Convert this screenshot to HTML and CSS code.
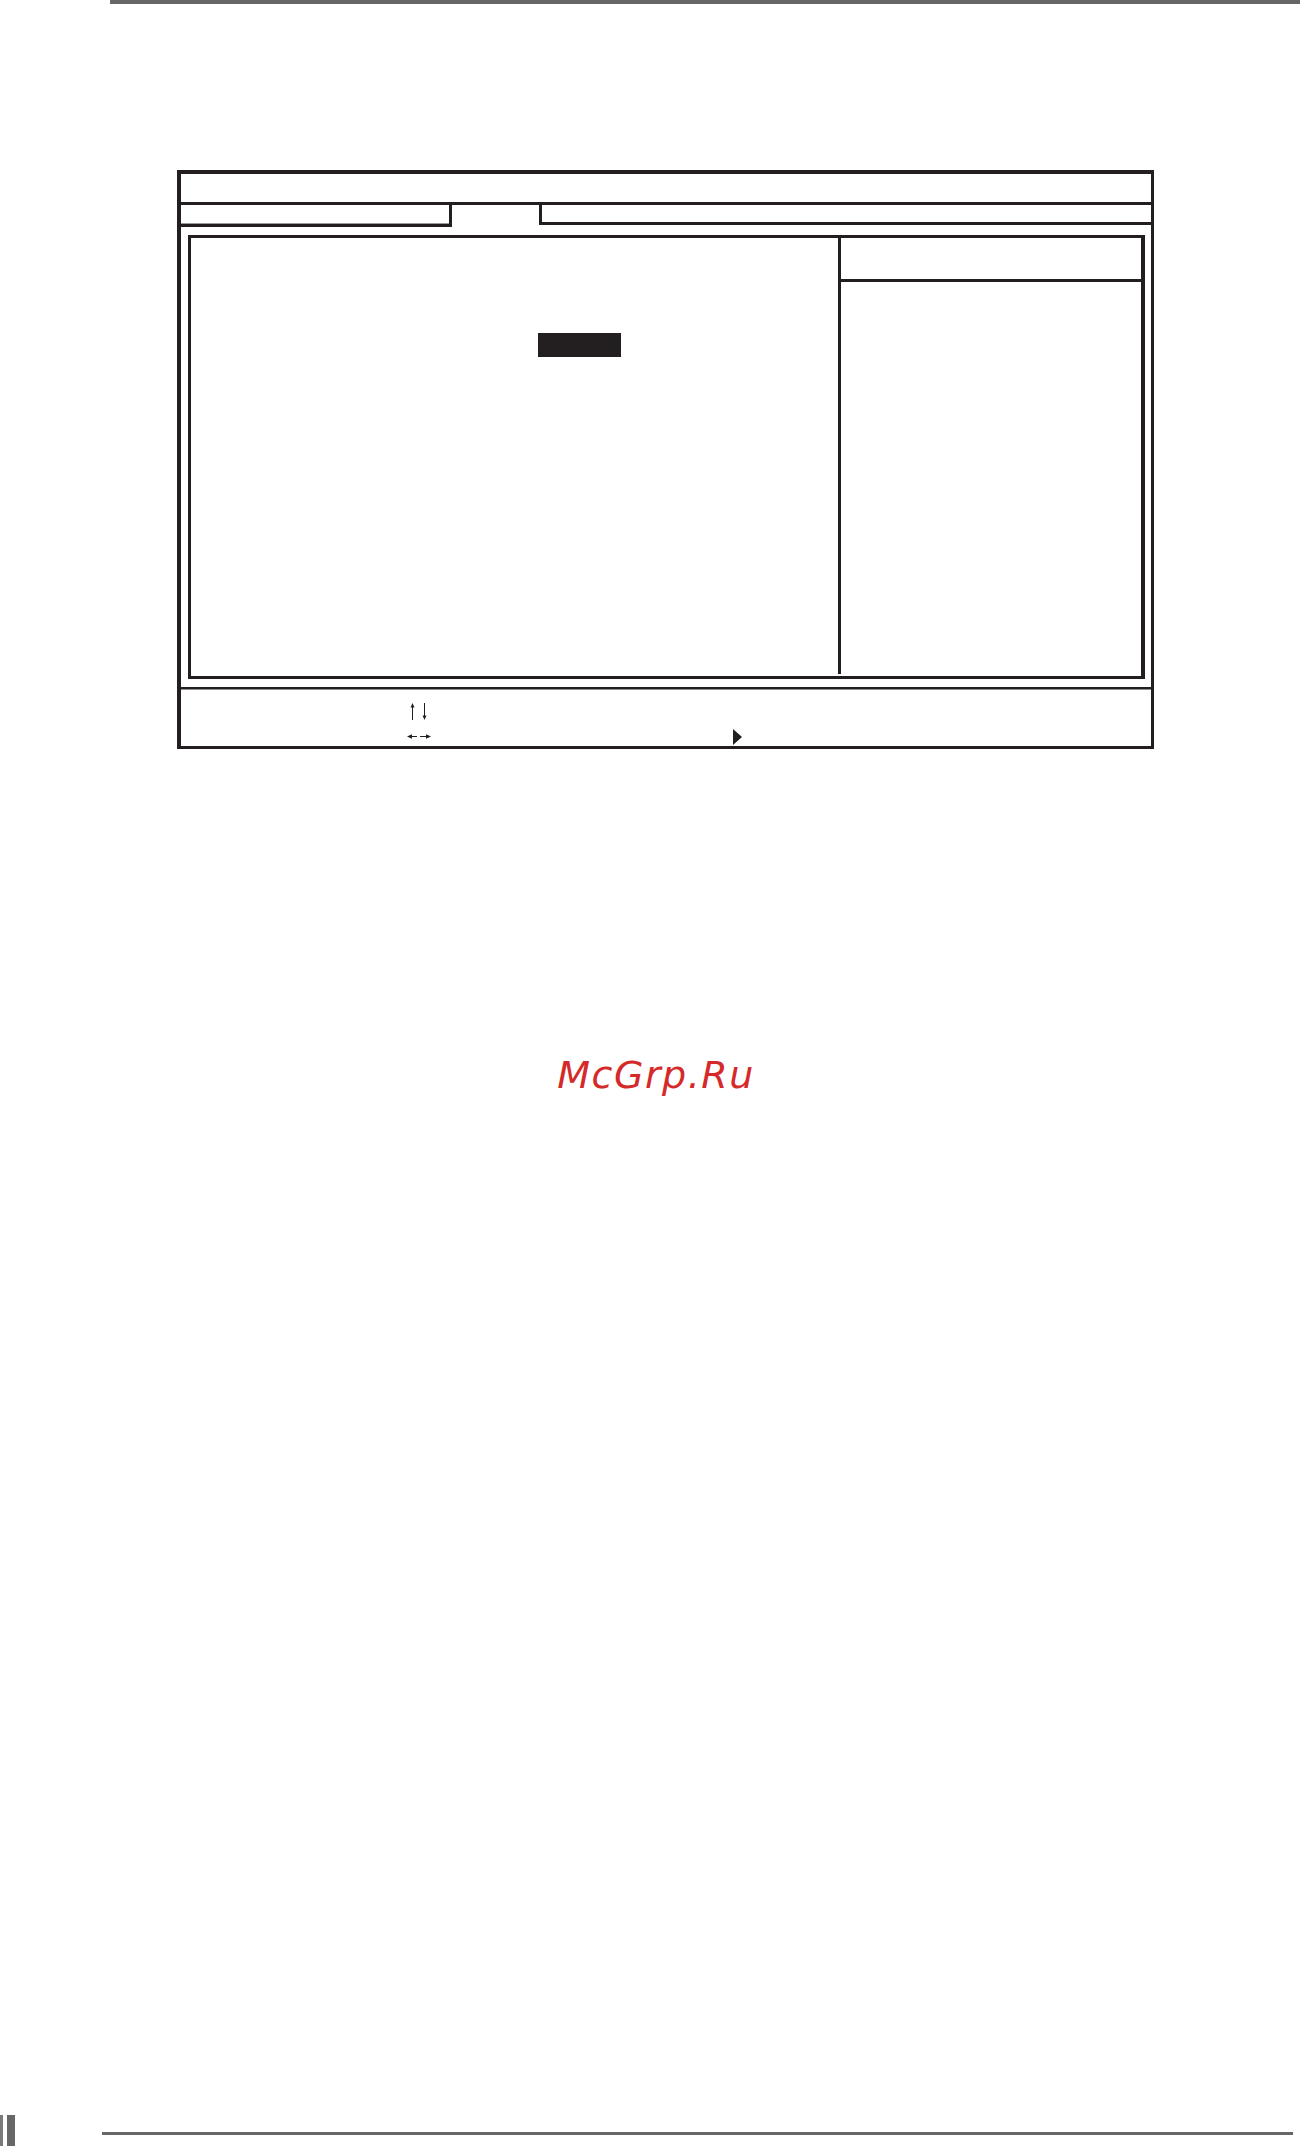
FILE: index.html
```html
<!DOCTYPE html>
<html lang="en">
<head>
<meta charset="utf-8">
<title>BIOS Setup</title>
<link rel="stylesheet" href="styles.css">
</head>
<body>
<div class="page">
  <div class="top-rule"></div>

  <div class="bios">
    <div class="bios-title"></div>
    <div class="bios-tabs">
      <div class="tab-left"></div>
      <div class="tab-active"></div>
      <div class="tab-right"></div>
    </div>
    <div class="bios-main">
      <div class="main-left">
        <div class="highlight"></div>
      </div>
      <div class="main-sep"></div>
      <div class="main-help">
        <div class="help-head"></div>
      </div>
    </div>
    <div class="bios-rule"></div>
    <div class="bios-foot">
      <div class="keys">
        <svg class="key-ud" width="20" height="18" viewBox="0 0 20 18" aria-hidden="true">
          <line x1="3.5" y1="3" x2="3.5" y2="17" stroke="#231f20" stroke-width="1"/>
          <polygon points="1.5,4.5 3.5,0 5.5,4.5" fill="#231f20"/>
          <line x1="15.5" y1="0" x2="15.5" y2="14" stroke="#231f20" stroke-width="1"/>
          <polygon points="13.5,12.5 15.5,17 17.5,12.5" fill="#231f20"/>
        </svg>
        <svg class="key-lr" width="24" height="7" viewBox="0 0 24 7" aria-hidden="true">
          <polygon points="0,3.5 5,1.2 5,5.8" fill="#231f20"/>
          <line x1="4" y1="3.5" x2="10" y2="3.5" stroke="#231f20" stroke-width="1"/>
          <line x1="13" y1="3.5" x2="19" y2="3.5" stroke="#231f20" stroke-width="1"/>
          <polygon points="24,3.5 19,1.2 19,5.8" fill="#231f20"/>
        </svg>
      </div>
      <svg class="submenu-mark" width="9" height="16" viewBox="0 0 9 16" aria-hidden="true">
        <polygon points="0,0 9,8 0,16" fill="#231f20"/>
      </svg>
    </div>
  </div>

  <div class="watermark">McGrp.Ru</div>

  <div class="page-foot">
    <div class="bar-thin"></div>
    <div class="bar-thick"></div>
    <div class="foot-rule"></div>
  </div>
</div>
</body>
</html>
```

FILE: styles.css
```css
html, body {
  margin: 0;
  padding: 0;
  background: #ffffff;
}

.page {
  width: 1300px;
  height: 2146px;
  overflow: hidden;
  font-family: "DejaVu Sans", "Liberation Sans", sans-serif;
}

.top-rule {
  margin-left: 110px;
  height: 4px;
  background: #676767;
}

/* BIOS frame */
.bios {
  margin-top: 166px;
  margin-left: 177px;
  width: 977px;
  height: 579px;
  box-sizing: border-box;
  border-style: solid;
  border-color: #231f20;
  border-width: 4px 3px 3px 4px;
  display: flex;
  flex-direction: column;
}

.bios-title {
  height: 28px;
  border-bottom: 3px solid #231f20;
}

.bios-tabs {
  display: flex;
  align-items: flex-start;
  height: 22px;
}

.tab-left {
  width: 271px;
  height: 22px;
  box-sizing: border-box;
  border-right: 3px solid #231f20;
  border-bottom: 3px solid #231f20;
  box-shadow: 0 -1px 0 #9a9a9a inset;
}

.tab-active {
  width: 87px;
  height: 22px;
}

.tab-right {
  flex: 1;
  height: 20px;
  box-sizing: border-box;
  border-left: 3px solid #231f20;
  border-bottom: 3px solid #231f20;
}

.bios-main {
  margin: 8px 6px 0 7px;
  height: 444px;
  box-sizing: border-box;
  border-style: solid;
  border-color: #231f20;
  border-width: 3px 4px 3px 3px;
  display: flex;
}

.main-left {
  width: 647px;
}

.highlight {
  margin-top: 95px;
  margin-left: 347px;
  width: 83px;
  height: 24px;
  background: #231f20;
}

.main-sep {
  width: 3px;
  margin-bottom: 2px;
  background: #231f20;
}

.main-help {
  flex: 1;
}

.help-head {
  height: 41px;
  border-bottom: 3px solid #231f20;
}

.bios-rule {
  margin-top: 8px;
  height: 0;
  border-top: 2px solid #231f20;
  border-bottom: 1px solid #8f8f8f;
}

.bios-foot {
  height: 56px;
  display: flex;
  align-items: flex-start;
  padding-left: 226px;
}

.keys {
  width: 24px;
  display: flex;
  flex-direction: column;
  align-items: flex-start;
  padding-top: 13px;
  gap: 12px;
}

.key-ud {
  display: block;
  margin-left: 2px;
}

.key-lr {
  display: block;
}

.submenu-mark {
  display: block;
  margin-left: 302px;
  margin-top: 39px;
}

/* watermark */
.watermark {
  margin-top: 307px;
  padding-left: 12px;
  height: 38px;
  font-size: 38px;
  line-height: 38px;
  font-style: oblique;
  letter-spacing: 1.5px;
  color: #d52a2a;
  text-align: center;
}

/* page footer */
.page-foot {
  margin-top: 1021px;
  height: 31px;
  display: flex;
  align-items: flex-start;
}

.bar-thin {
  width: 3px;
  height: 31px;
  background: #7a7a7a;
}

.bar-thick {
  margin-left: 4px;
  width: 8px;
  height: 31px;
  background: #676767;
}

.foot-rule {
  margin-left: 87px;
  margin-top: 17px;
  width: 1191px;
  height: 3px;
  background: #676767;
}
```
